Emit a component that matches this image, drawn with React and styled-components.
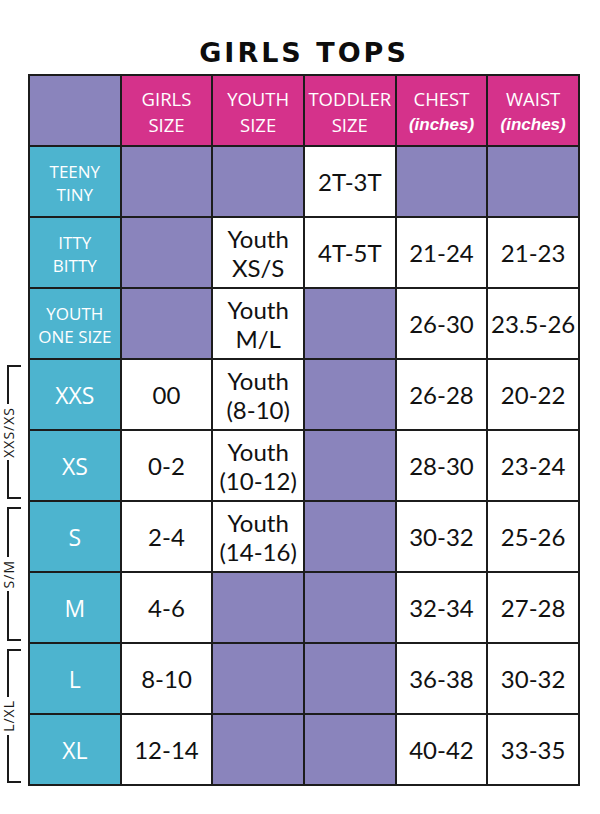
import React from 'react';
import styled, { createGlobalStyle } from 'styled-components';

const GlobalStyle = createGlobalStyle`
  html, body {
    margin: 0;
    padding: 0;
    background: #fff;
  }
`;

const Page = styled.div`
  width: 600px;
  height: 814px;
  padding-top: 37px;
  box-sizing: border-box;
  background: #fff;
`;

const Title = styled.h1`
  margin: 0 0 5px;
  padding-left: 8px;
  height: 32px;
  font-family: 'DejaVu Sans', sans-serif;
  font-weight: 700;
  font-size: 27px;
  line-height: 32px;
  letter-spacing: 3px;
  text-align: center;
  color: #0d0d0d;
`;

const Body = styled.div`
  display: flex;
  align-items: stretch;
`;

const BracketColumn = styled.div`
  width: 28px;
  display: flex;
  flex-direction: column;
  justify-content: flex-end;
  gap: 8px;
  padding-bottom: 3px;
`;

const Bracket = styled.div`
  height: 134px;
  display: flex;
  flex-direction: column;
  align-items: flex-start;
`;

const Arm = styled.div`
  flex: 1;
  width: 12px;
  margin-left: 7px;
  border-left: 2px solid #1a1a1a;
  border-top: ${(p) => (p.top ? '2px solid #1a1a1a' : 'none')};
  border-bottom: ${(p) => (p.top ? 'none' : '2px solid #1a1a1a')};
`;

const BracketLabel = styled.span`
  writing-mode: vertical-rl;
  transform: rotate(180deg);
  margin-left: 0;
  padding: 3px 0;
  font-family: 'Open Sans', sans-serif;
  font-size: 14px;
  line-height: 17px;
  letter-spacing: 1px;
  color: #1a1a1a;
`;

const Grid = styled.div`
  width: 552px;
  box-sizing: border-box;
  display: grid;
  grid-template-columns: repeat(6, 1fr);
  grid-auto-rows: 69px;
  gap: 2px;
  padding: 2px;
  background: #1c1c1c;
`;

const fills = {
  head: '#d5328b',
  side: '#4db4cf',
  empty: '#8a84bc',
  value: '#ffffff',
};

const Cell = styled.div`
  display: flex;
  flex-direction: column;
  align-items: center;
  justify-content: center;
  text-align: center;
  padding-top: ${(p) => (p.kind === 'value' ? '0' : '2px')};
  background: ${(p) => fills[p.kind]};
  color: ${(p) => (p.kind === 'value' ? '#111' : '#fff')};
  font-family: ${(p) => (p.kind === 'value' ? "'Lato', sans-serif" : "'Open Sans', sans-serif")};
  font-size: ${(p) => (p.kind === 'value' ? '24px' : p.kind === 'head' ? '18.5px' : p.big ? '23px' : '17px')};
  line-height: ${(p) => (p.kind === 'value' ? '29px' : p.kind === 'head' ? '26px' : '23px')};
  white-space: nowrap;
`;

const Unit = styled.span`
  font-family: 'Liberation Sans', Arial, sans-serif;
  font-weight: 700;
  font-style: italic;
  font-size: 17px;
`;

const headers = [
  null,
  ['GIRLS', 'SIZE'],
  ['YOUTH', 'SIZE'],
  ['TODDLER', 'SIZE'],
  ['CHEST', 'unit'],
  ['WAIST', 'unit'],
];

const rows = [
  { label: ['TEENY', 'TINY'], cells: [null, null, ['2T-3T'], null, null] },
  { label: ['ITTY', 'BITTY'], cells: [null, ['Youth', 'XS/S'], ['4T-5T'], ['21-24'], ['21-23']] },
  { label: ['YOUTH', 'ONE SIZE'], cells: [null, ['Youth', 'M/L'], null, ['26-30'], ['23.5-26']] },
  { label: ['XXS'], cells: [['00'], ['Youth', '(8-10)'], null, ['26-28'], ['20-22']] },
  { label: ['XS'], cells: [['0-2'], ['Youth', '(10-12)'], null, ['28-30'], ['23-24']] },
  { label: ['S'], cells: [['2-4'], ['Youth', '(14-16)'], null, ['30-32'], ['25-26']] },
  { label: ['M'], cells: [['4-6'], null, null, ['32-34'], ['27-28']] },
  { label: ['L'], cells: [['8-10'], null, null, ['36-38'], ['30-32']] },
  { label: ['XL'], cells: [['12-14'], null, null, ['40-42'], ['33-35']] },
];

const brackets = ['XXS/XS', 'S/M', 'L/XL'];

const Lines = ({ lines }) =>
  lines.map((t, i) =>
    t === 'unit' ? <Unit key={i}>(inches)</Unit> : <span key={i}>{t}</span>
  );

export default function App() {
  return (
    <Page>
      <GlobalStyle />
      <Title>GIRLS TOPS</Title>
      <Body>
        <BracketColumn>
          {brackets.map((b) => (
            <Bracket key={b}>
              <Arm top />
              <BracketLabel>{b}</BracketLabel>
              <Arm />
            </Bracket>
          ))}
        </BracketColumn>
        <Grid>
          {headers.map((h, i) =>
            h ? (
              <Cell key={'h' + i} kind="head">
                <Lines lines={h} />
              </Cell>
            ) : (
              <Cell key={'h' + i} kind="empty" />
            )
          )}
          {rows.map((r, ri) => (
            <React.Fragment key={ri}>
              <Cell kind="side" big={r.label.length === 1}>
                <Lines lines={r.label} />
              </Cell>
              {r.cells.map((c, ci) =>
                c ? (
                  <Cell key={ci} kind="value">
                    <Lines lines={c} />
                  </Cell>
                ) : (
                  <Cell key={ci} kind="empty" />
                )
              )}
            </React.Fragment>
          ))}
        </Grid>
      </Body>
    </Page>
  );
}
